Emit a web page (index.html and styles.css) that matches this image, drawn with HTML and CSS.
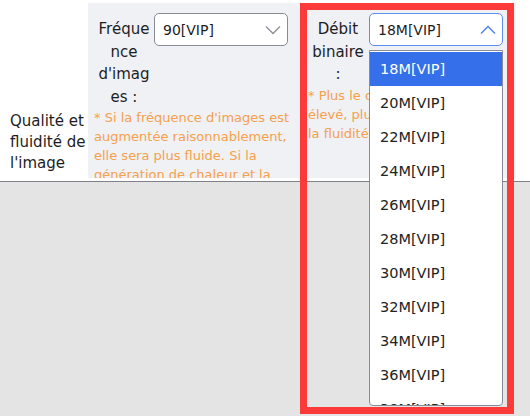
FILE: index.html
```html
<!DOCTYPE html>
<html lang="fr">
<head>
  <meta charset="UTF-8" />
  <meta name="viewport" content="width=device-width, initial-scale=1.0"/>
  <title>Qualité de l'image</title>
  <link rel="stylesheet" href="styles.css">
</head>
<body>

  <section class="settings">
    <div class="settings-clip">
      <div class="settings-row">
        <div class="row-title">Qualité et fluidité de l'image</div>

        <div class="cell">
          <div class="field">
            <label class="field-label">Fréquence d'images :</label>
            <div class="select">
              <span>90[VIP]</span>
              <svg class="chevron" width="16" height="10" viewBox="0 0 16 10"><path d="M1 1.5 L8 8.5 L15 1.5" fill="none" stroke="#8e8e99" stroke-width="1.3"/></svg>
            </div>
          </div>
          <p class="hint">* Si la fréquence d'images est augmentée raisonnablement, elle sera plus fluide. Si la génération de chaleur et la consommation d'énergie sont trop importantes, réduisez-la.</p>
        </div>

        <div class="cell cell-active">
          <div class="field">
            <label class="field-label">Débit binaire :</label>
            <div class="select select-open">
              <span>18M[VIP]</span>
              <svg class="chevron" width="16" height="10" viewBox="0 0 16 10"><path d="M1 8.5 L8 1.5 L15 8.5" fill="none" stroke="#4a80ee" stroke-width="1.3"/></svg>
            </div>
          </div>
          <p class="hint">* Plus le débit est<br>élevé, plus c'est net et<br>la fluidité est meilleure.</p>
        </div>
      </div>
    </div>
  </section>

  <div class="highlight"></div>

  <ul class="dropdown">
    <li class="selected">18M[VIP]</li>
    <li>20M[VIP]</li>
    <li>22M[VIP]</li>
    <li>24M[VIP]</li>
    <li>26M[VIP]</li>
    <li>28M[VIP]</li>
    <li>30M[VIP]</li>
    <li>32M[VIP]</li>
    <li>34M[VIP]</li>
    <li>36M[VIP]</li>
    <li>38M[VIP]</li>
  </ul>

</body>
</html>
```

FILE: styles.css
```css
:root {
  --panel: #eff1f5;
  --hint: #f5a04c;
  --red: #fc3a3a;
  --blue: #356fe9;
  --border: #8b8b97;
}

* {
  box-sizing: border-box;
  margin: 0;
  padding: 0;
}

body {
  font-family: 'DejaVu Sans', 'Noto Sans', sans-serif;
  background: #e4e4e4;
  color: #1d1d1f;
  position: relative;
  min-height: 416px;
}

.settings {
  background: #fff;
  padding: 3px 0;
  border-bottom: 1px solid #818189;
}

.settings-clip {
  height: 175px;
  overflow: hidden;
}

.settings-row {
  display: flex;
  height: 278px;
}

.row-title {
  width: 88px;
  padding-left: 10px;
  align-self: center;
  font-size: 15px;
  line-height: 21px;
}

.cell {
  width: 214px;
  background: var(--panel);
  padding: 10px 6px;
}

.field {
  display: flex;
  align-items: flex-start;
}

.field-label {
  width: 60px;
  flex-shrink: 0;
  padding-top: 5px;
  text-align: center;
  font-size: 15px;
  line-height: 22.5px;
  overflow-wrap: anywhere;
}

.select {
  width: 134px;
  height: 33px;
  background: #fff;
  border: 1px solid var(--border);
  border-radius: 5px;
  display: flex;
  align-items: center;
  justify-content: space-between;
  padding: 0 6px 0 8px;
  font-size: 14px;
}

.select-open {
  border-color: #5b8ff0;
  margin-left: 1px;
}

.hint {
  color: var(--hint);
  font-size: 13px;
  line-height: 19px;
}

.highlight {
  position: absolute;
  left: 300px;
  top: 3px;
  width: 214px;
  height: 411px;
  border: 7px solid var(--red);
  pointer-events: none;
}

.dropdown {
  position: absolute;
  left: 369px;
  top: 50px;
  width: 134px;
  height: 356px;
  overflow: hidden;
  list-style: none;
  background: #fff;
  border: 1px solid var(--border);
  border-radius: 0 0 4px 4px;
  padding-top: 1px;
}

.dropdown li {
  height: 34px;
  line-height: 34px;
  padding-left: 10px;
  font-size: 14.5px;
  color: #222;
}

.dropdown li.selected {
  background: var(--blue);
  color: #fff;
}
```
